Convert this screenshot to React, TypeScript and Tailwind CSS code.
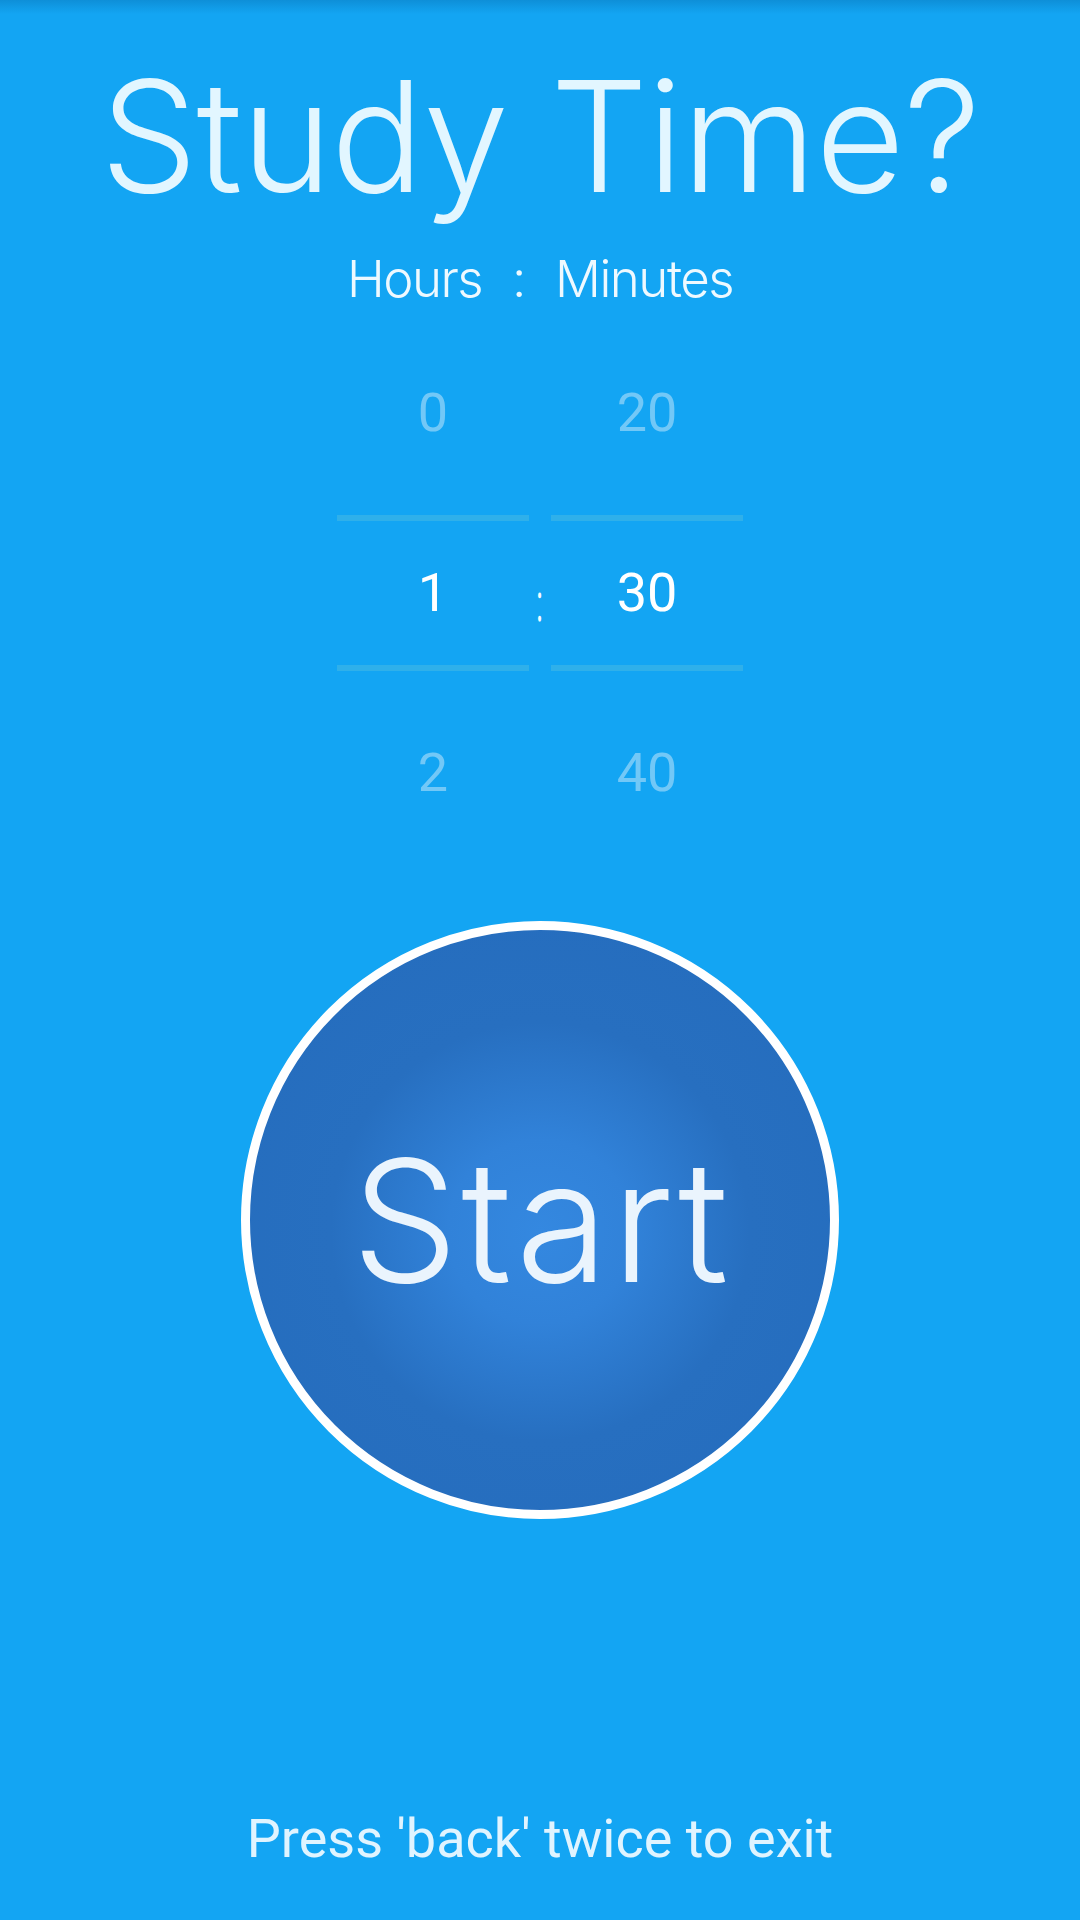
const hours = ['0', '1', '2'];
const minutes = ['20', '30', '40'];

function PickerColumn({ values }: { values: string[] }) {
  return (
    <div className="flex w-[192px] flex-col">
      {values.map((v, i) => (
        <div key={v} className="flex h-[180px] items-center justify-center">
          {i === 1 ? (
            <div className="flex h-[156px] w-full items-center justify-center border-y-[6px] border-[#2fb0ea] text-white">
              {v}
            </div>
          ) : (
            <span className="text-[#72c8f7]">{v}</span>
          )}
        </div>
      ))}
    </div>
  );
}

export default function App() {
  return (
    <div className="flex min-h-[1920px] w-[1080px] flex-col items-center bg-[#13a5f3] font-['Inter',sans-serif]">
      {/* status bar shadow */}
      <div className="h-[14px] w-full bg-gradient-to-b from-[#0e8fd8] to-[#13a5f3]" />

      <h1 className="mt-[45px] text-[154px] font-light leading-none tracking-[-1px] text-[#e2f6ff]">
        Study Time?
      </h1>

      <div className="mt-[40px] flex items-center gap-[30px] text-[51px] font-light leading-none tracking-[-1.5px] text-[#eef9ff]">
        <span>Hours</span>
        <span>:</span>
        <span>Minutes</span>
      </div>

      {/* number picker */}
      <div className="mt-[19px] flex font-['Roboto',sans-serif] text-[54px] leading-none">
        <PickerColumn values={hours} />
        <div className="flex w-[22px] flex-col">
          <div className="h-[180px]" />
          <div className="flex h-[180px] items-center justify-center pt-[20px] text-[54px] text-[#f4fbff]">
            <span className="scale-x-50">:</span>
          </div>
        </div>
        <PickerColumn values={minutes} />
      </div>

      {/* start button */}
      <button className="mt-[58px] flex h-[598px] w-[598px] items-center justify-center rounded-full border-[9px] border-white bg-[radial-gradient(circle_at_50%_52%,#3488e0_0%,#3182d9_22%,#276fc0_50%,#246cbc_100%)]">
        <span className="pl-[3px] text-[169px] font-light leading-none tracking-[3px] text-[#eaf4fd]">Start</span>
      </button>

      <div className="mt-auto pb-[54px] font-['Roboto',sans-serif] text-[54px] leading-none text-[#e0f4ff]">
        Press 'back' twice to exit
      </div>
    </div>
  );
}
